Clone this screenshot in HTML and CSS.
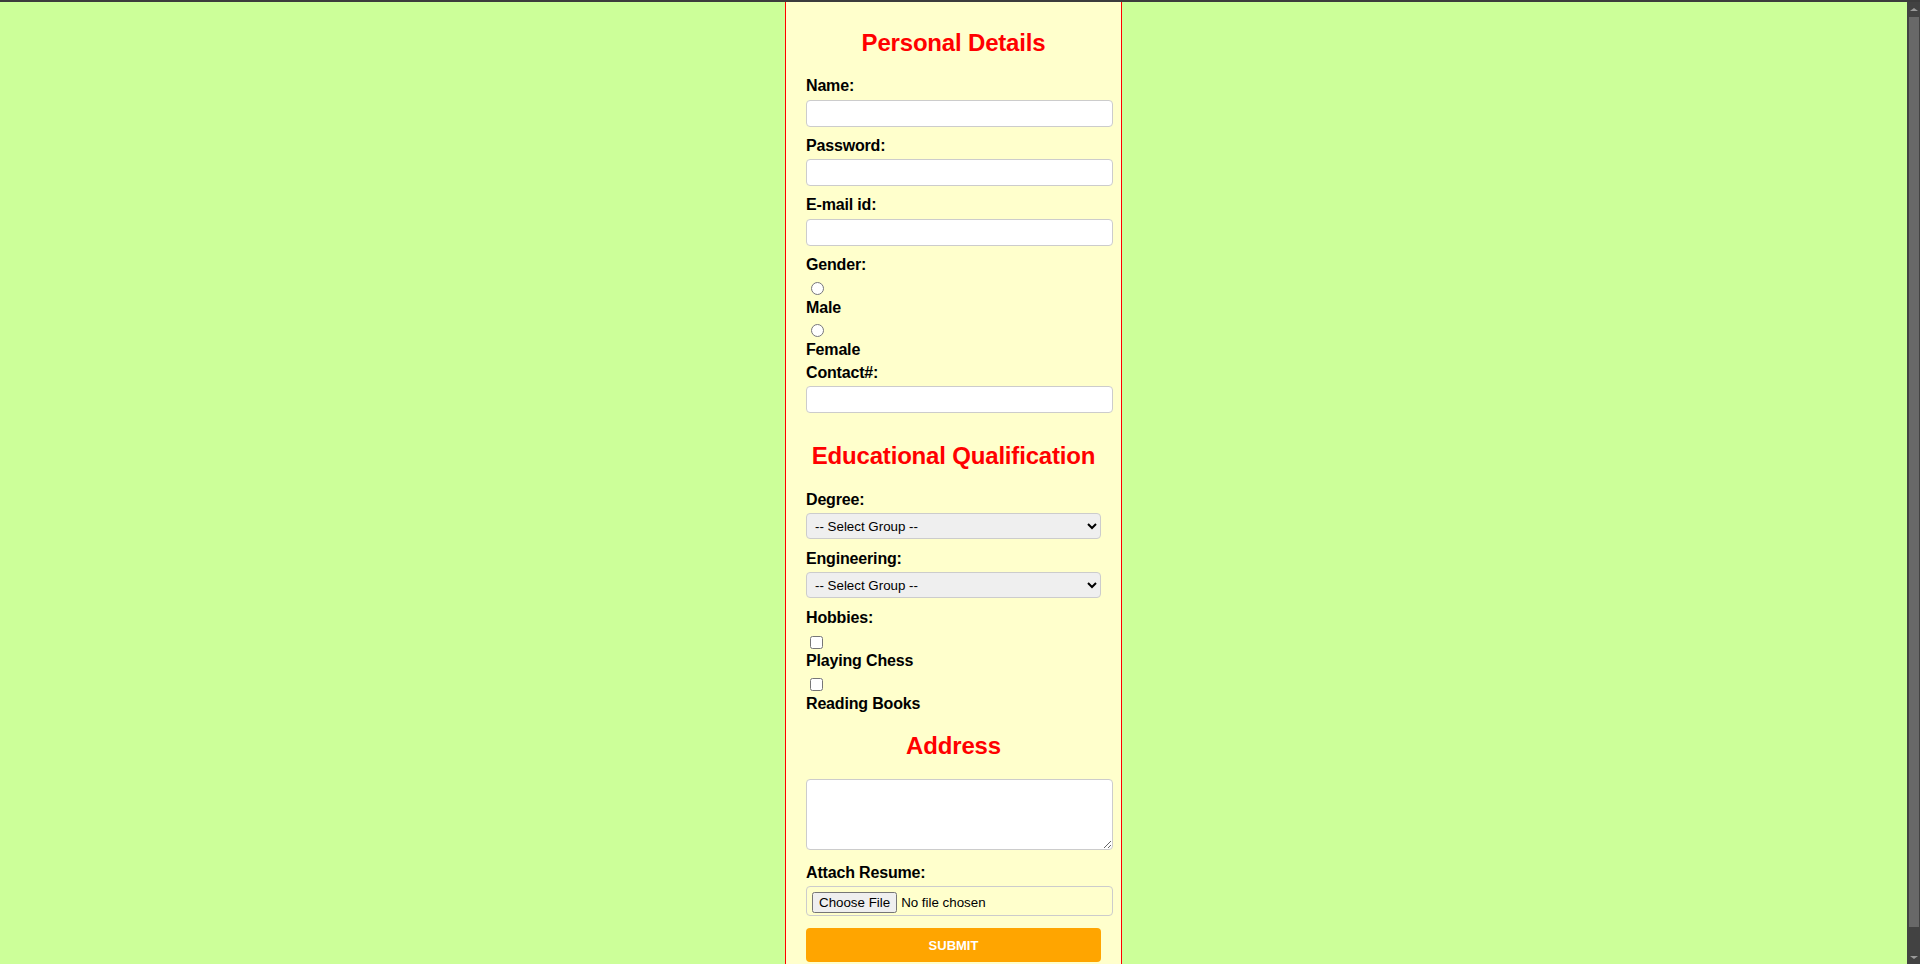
FILE: index.html
```html
<!DOCTYPE html>
<html lang="en">
<head>
<meta charset="utf-8">
<title>Registration Form</title>
<link rel="stylesheet" href="styles.css">
</head>
<body>
<div class="window">
  <main class="viewport">
    <form class="form-box">
      <h2 class="section-title">Personal Details</h2>
      <div class="field">
        <label class="field-label" for="name">Name:</label>
        <input class="text-input" type="text" id="name">
      </div>
      <div class="field">
        <label class="field-label" for="password">Password:</label>
        <input class="text-input" type="password" id="password">
      </div>
      <div class="field">
        <label class="field-label" for="email">E-mail id:</label>
        <input class="text-input" type="email" id="email">
      </div>
      <div class="field field-choices field-gender">
        <span class="field-label">Gender:</span>
        <input class="choice choice-radio" type="radio" name="gender" id="male">
        <label class="choice-label" for="male">Male</label>
        <input class="choice choice-radio" type="radio" name="gender" id="female">
        <label class="choice-label" for="female">Female</label>
      </div>
      <div class="field">
        <label class="field-label" for="contact">Contact#:</label>
        <input class="text-input" type="text" id="contact">
      </div>

      <h2 class="section-title">Educational Qualification</h2>
      <div class="field">
        <label class="field-label" for="degree">Degree:</label>
        <select class="select-input" id="degree">
          <option>-- Select Group --</option>
        </select>
      </div>
      <div class="field">
        <label class="field-label" for="engineering">Engineering:</label>
        <select class="select-input" id="engineering">
          <option>-- Select Group --</option>
        </select>
      </div>
      <div class="field field-choices">
        <span class="field-label">Hobbies:</span>
        <input class="choice choice-check" type="checkbox" id="chess">
        <label class="choice-label" for="chess">Playing Chess</label>
        <input class="choice choice-check" type="checkbox" id="books">
        <label class="choice-label" for="books">Reading Books</label>
      </div>

      <h2 class="section-title">Address</h2>
      <div class="field field-area">
        <textarea class="area-input" aria-label="Address"></textarea>
      </div>
      <div class="field field-file">
        <label class="field-label" for="resume">Attach Resume:</label>
        <input class="file-input" type="file" id="resume">
      </div>
      <button class="submit-btn" type="submit">SUBMIT</button>
    </form>
  </main>
  <div class="scrollbar" aria-hidden="true">
    <div class="scroll-btn"><span class="arrow-up"></span></div>
    <div class="scroll-thumb"></div>
    <div class="scroll-btn"><span class="arrow-down"></span></div>
  </div>
</div>
</body>
</html>
```

FILE: styles.css
```css
html, body {
  margin: 0;
  padding: 0;
  height: 100%;
  overflow: hidden;
}

body {
  box-sizing: border-box;
  background: #ccff99;
  border-top: 2px solid #3c3c3c;
  font-family: "Liberation Sans", Arial, sans-serif;
  color: #000;
}

.window {
  display: flex;
  height: 100%;
}

.viewport {
  flex: 1;
  min-width: 0;
  overflow: hidden;
}

.scrollbar {
  width: 13px;
  flex: none;
  display: flex;
  flex-direction: column;
  background: #424242;
}

.scroll-btn {
  height: 14px;
  display: flex;
  align-items: center;
  justify-content: center;
}

.arrow-up {
  width: 0;
  height: 0;
  border-left: 4px solid transparent;
  border-right: 4px solid transparent;
  border-bottom: 3px solid #9a9a9a;
}

.arrow-down {
  width: 0;
  height: 0;
  border-left: 4px solid transparent;
  border-right: 4px solid transparent;
  border-top: 3px solid #9a9a9a;
}

.scroll-thumb {
  flex: 1;
  margin: 1px 1px 23px 2px;
  background: #686868;
}

.form-box {
  width: 295px;
  margin: 0 auto;
  padding: 7px 20px 27px;
  background: #ffffcc;
  border-left: 1px solid #ff0000;
  border-right: 1px solid #ff0000;
}

.section-title {
  margin: 19.92px 0;
  font-size: 24px;
  font-weight: bold;
  color: #ff0000;
  text-align: center;
  line-height: 27.6px;
  letter-spacing: -0.18px;
}

.field {
  padding-bottom: 9px;
}

.field-label {
  display: block;
  font-size: 16px;
  font-weight: bold;
  line-height: 18.4px;
  padding-top: 1px;
  margin-bottom: 4px;
  letter-spacing: -0.17px;
}

.text-input,
.area-input,
.file-input {
  display: block;
  width: 100%;
  box-sizing: content-box;
  padding: 5px;
  border: 1px solid #cccccc;
  border-radius: 4px;
  margin: 0;
  font-family: "Liberation Sans", Arial, sans-serif;
  font-size: 13.33px;
}

.text-input {
  height: 15px;
  background: #ffffff;
}

.area-input {
  height: 59px;
  background: #ffffff;
}

.file-input {
  height: 18px;
  background: transparent;
}

.file-input::file-selector-button {
  padding: 1px 5px;
  margin-right: 4px;
}

.select-input {
  display: block;
  width: 100%;
  height: 26px;
  margin: 0 0 1px;
  padding: 0 0 0 4px;
  box-sizing: border-box;
  border: 1px solid #cccccc;
  border-radius: 4px;
  background-color: #efefef;
  font-family: "Liberation Sans", Arial, sans-serif;
  font-size: 13.33px;
  color: #000;
}

.field-choices .field-label {
  margin-bottom: -1px;
}

.field-choices {
  padding-bottom: 0;
}

.field-gender {
  padding-bottom: 5px;
}

.choice {
  display: block;
  width: 13px;
  height: 13px;
  margin: 9px 0 2px 5px;
}

.choice-check {
  margin-left: 4px;
}

.choice-label {
  display: block;
  font-size: 16px;
  font-weight: bold;
  line-height: 18.4px;
  padding-top: 1.5px;
  margin-bottom: -1.5px;
  letter-spacing: -0.17px;
}

.field-area {
  padding-bottom: 12.6px;
}

.field-file {
  padding-bottom: 12px;
}

.submit-btn {
  display: block;
  width: 100%;
  height: 34px;
  margin: 0;
  border: none;
  border-radius: 4px;
  background: #ffa500;
  color: #ffffff;
  font-family: "Liberation Sans", Arial, sans-serif;
  font-size: 13px;
  font-weight: bold;
}
```
